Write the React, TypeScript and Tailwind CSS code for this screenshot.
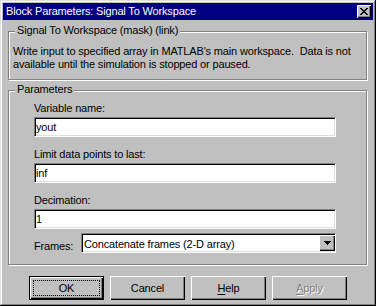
// Win95-style "Block Parameters" dialog

const raised =
  "shadow-[inset_1px_1px_0_#fff,inset_-1px_-1px_0_#000,inset_-2px_-2px_0_#808080]";
const sunken =
  "border border-t-[#808080] border-l-[#808080] border-r-white border-b-white bg-white shadow-[inset_1px_1px_0_#000,inset_-1px_-1px_0_#dfdfdf]";

export default function App() {
  return (
    <div className="h-[306px] w-[376px] bg-[#c0c0c0] p-[3px] font-['Liberation_Sans',Arial,sans-serif] text-[11px] leading-[13px] tracking-[-0.16px] text-black shadow-[inset_-1px_-1px_0_#000,inset_1px_1px_0_#dfdfdf,inset_-2px_-2px_0_#808080,inset_2px_2px_0_#fff]">
      {/* Title bar */}
      <div className="flex h-[17px] items-center justify-between bg-[#000080] pl-[3px] pr-[2px]">
        <span className="text-white">Block Parameters: Signal To Workspace</span>
        <CloseButton />
      </div>

      {/* Description */}
      <GroupBox title="Signal To Workspace (mask) (link)" className="ml-[5px] mt-[11px] pb-[8px] pl-[4px] pt-[13px]">
        <p className="whitespace-pre">
          {"Write input to specified array in MATLAB's main workspace.  Data is not"}
          <br />
          {"available until the simulation is stopped or paused."}
        </p>
      </GroupBox>

      {/* Parameters */}
      <GroupBox title="Parameters" className="ml-[5px] mt-[10px] pb-[11px] pl-[25px] pt-[11px]">
        <Field label="Variable name:" value="yout" />
        <Field label="Limit data points to last:" value="inf" className="mt-[11px]" />
        <Field label="Decimation:" value="1" className="mt-[11px]" />
        <div className="mt-[4px] flex items-start">
          <span className="mt-[7px] w-[47px]">Frames:</span>
          <div className={"flex h-[20px] w-[255px] items-center " + sunken}>
            <span className="flex-1 pl-[2px] pt-[2px]">Concatenate frames (2-D array)</span>
            <DropButton />
          </div>
        </div>
      </GroupBox>

      {/* Buttons */}
      <div className="ml-[26px] mt-[11px] flex gap-[6px]">
        <button className="flex h-[24px] w-[75px] items-center justify-center border border-black p-[3px] shadow-[inset_1px_1px_0_#fff,inset_-1px_-1px_0_#000,inset_-2px_-2px_0_#808080]">
          <span className="flex h-full w-full items-center justify-center border border-dotted border-black">OK</span>
        </button>
        <Button>Cancel</Button>
        <Button>
          <span className="underline underline-offset-2">H</span>elp
        </Button>
        <Button className="text-[#808080] [text-shadow:1px_1px_0_#fff]">
          <span className="underline underline-offset-2">A</span>pply
        </Button>
      </div>
    </div>
  );
}

// ============= UI Partials ============= //
function GroupBox({
  title,
  className = "",
  children,
}: {
  title: string;
  className?: string;
  children: React.ReactNode;
}) {
  return (
    <div
      className={
        "relative w-[359px] border border-[#808080] shadow-[1px_1px_0_#fff,inset_1px_1px_0_#fff] " +
        className
      }
    >
      <span className="absolute left-[6px] top-[-8px] bg-[#c0c0c0] px-[2px]">{title}</span>
      {children}
    </div>
  );
}

function Field({ label, value, className = "" }: { label: string; value: string; className?: string }) {
  return (
    <div className={className}>
      <div>{label}</div>
      <div className={"mt-[2px] flex h-[20px] w-[302px] items-center pl-[1px] " + sunken}>{value}</div>
    </div>
  );
}

function Button({ className = "", children }: { className?: string; children: React.ReactNode }) {
  return (
    <button className={"flex h-[24px] w-[75px] items-center justify-center " + raised + " " + className}>
      {children}
    </button>
  );
}

function DropButton() {
  return (
    <div className={"flex h-[16px] w-[16px] items-center justify-center bg-[#c0c0c0] " + raised}>
      <svg width="7" height="4" viewBox="0 0 7 4" shapeRendering="crispEdges">
        <rect x="0" y="0" width="7" height="1" fill="#000" />
        <rect x="1" y="1" width="5" height="1" fill="#000" />
        <rect x="2" y="2" width="3" height="1" fill="#000" />
        <rect x="3" y="3" width="1" height="1" fill="#000" />
      </svg>
    </div>
  );
}

function CloseButton() {
  const px = [
    [0, 0], [1, 0], [6, 0], [7, 0],
    [1, 1], [2, 1], [5, 1], [6, 1],
    [2, 2], [3, 2], [4, 2], [5, 2],
    [3, 3], [4, 3],
    [2, 4], [3, 4], [4, 4], [5, 4],
    [1, 5], [2, 5], [5, 5], [6, 5],
    [0, 6], [1, 6], [6, 6], [7, 6],
  ];
  return (
    <div className={"flex h-[13px] w-[14px] items-center justify-center bg-[#c0c0c0] " + raised}>
      <svg width="8" height="7" viewBox="0 0 8 7" shapeRendering="crispEdges" className="-mt-px">
        {px.map(([x, y]) => (
          <rect key={x + "-" + y} x={x} y={y} width="1" height="1" fill="#000" />
        ))}
      </svg>
    </div>
  );
}
